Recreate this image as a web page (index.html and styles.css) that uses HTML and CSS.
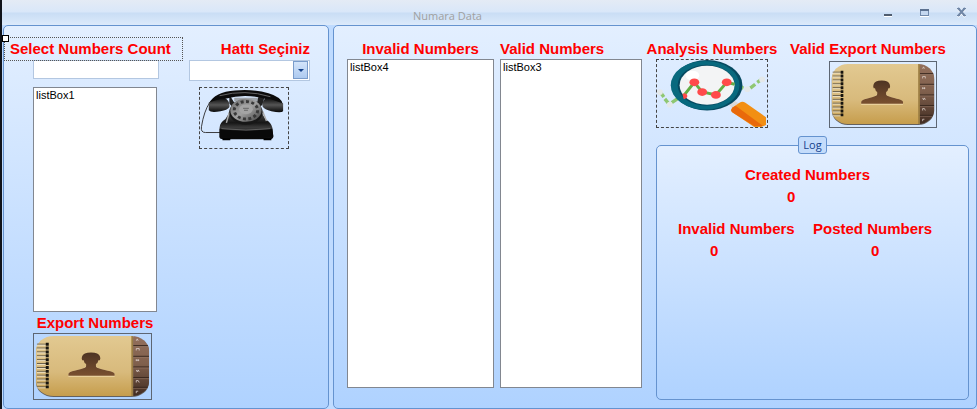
FILE: index.html
```html
<!DOCTYPE html>
<html lang="tr">
<head>
  <meta charset="UTF-8">
  <title>Numara Data</title>
  <meta name="viewport" content="width=device-width, initial-scale=1">
  <link rel="stylesheet" href="styles.css">
</head>
<body>
  <!-- shared notebook drawing -->
  <svg class="defs" width="0" height="0" aria-hidden="true">
    <defs>
      <linearGradient id="cover" x1="0" y1="0" x2="0" y2="1">
        <stop offset="0" stop-color="#e2c991"/>
        <stop offset=".6" stop-color="#d8ba7c"/>
        <stop offset="1" stop-color="#c69d4c"/>
      </linearGradient>
      <linearGradient id="tab" x1="0" y1="0" x2="0" y2="1">
        <stop offset="0" stop-color="#936f5c"/>
        <stop offset=".45" stop-color="#80604d"/>
        <stop offset="1" stop-color="#3f2a20"/>
      </linearGradient>
      <linearGradient id="person" x1="0" y1="0" x2="0" y2="1">
        <stop offset="0" stop-color="#4e3423"/>
        <stop offset="1" stop-color="#79502f"/>
      </linearGradient>
      <clipPath id="book"><rect x="2" y="2" width="115" height="62" rx="18" ry="15"/></clipPath>
      <symbol id="notebook" viewBox="0 0 119 67" preserveAspectRatio="none">
        <rect x="2" y="3" width="115" height="62" rx="18" ry="15" fill="#65615e"/>
        <g clip-path="url(#book)">
          <rect x="2" y="2" width="99" height="62" fill="url(#cover)"/>
          <rect x="99" y="2" width="2" height="62" fill="#9b7d43"/>
          <rect x="101" y="2" width="16" height="63" fill="url(#tab)"/>
          <path d="M101 12h16M101 23h16M101 34h16M101 45h16M101 55h16" stroke="#33231b"/>
          <path d="M101 13h16M101 24h16M101 35h16M101 46h16M101 56h16" stroke="#a08170" stroke-width=".5"/>
          <path d="M104 7l1-2 1 2M104 17v-2h3v2M104 28v-2M104 27h3M106 26v2M104 37l1 2 1-2 1 2M104 50v-2h2l1 2M104 61v-2h2" stroke="#dfd4cf" stroke-width=".8" fill="none"/>
        </g>
        <path d="M3 10.500h11M3 14.500h11M3 18.500h11M3 22.500h11M3 26.500h11M3 30.500h11M3 34.500h11M3 38.500h11M3 42.500h11M3 46.500h11M3 50.500h11M3 54.500h11" stroke="#5f5645"/>
        <path d="M3 11.500h9M3 15.500h9M3 19.500h9M3 23.500h9M3 27.500h9M3 31.500h9M3 35.500h9M3 39.500h9M3 43.500h9M3 47.500h9M3 51.500h9M3 55.500h9" stroke="#f2ead6" stroke-width=".8"/>
        <path d="M13.500 9v48" stroke="#17140f" stroke-width="3" stroke-dasharray="3 1"/>
        <path d="M35 44v-3q1-2 6-3l7-2q5-1 5-4h10q0 3 5 4l7 2q6 1 7 3v3z" fill="#efd9a8"/>
        <path d="M35 43v-2q1-2 6-3l7-2q5-1 5-3v-2q-2-1-2.500-4h-1.500q-1-2 0-4 1-4 9-4t9 4q1 2 0 4h-1.500q-.5 3-2.500 4v2q0 2 5 3l7 2q6 1 7 3v2z" fill="url(#person)"/>
      </symbol>
    </defs>
  </svg>

  <header class="titlebar">
    <h1 class="title">Numara Data</h1>
    <div class="window-btns">
      <button class="win-btn" aria-label="Minimize">
        <svg width="12" height="12"><path d="M2 10.500h8" stroke="#fff"/><path d="M2 9h8" stroke="#4f5d70" stroke-width="2"/></svg>
      </button>
      <button class="win-btn" aria-label="Maximize">
        <svg width="12" height="12"><rect x="1.500" y="3.500" width="8" height="6" fill="#c5d8f0" stroke="#7189ab"/><path d="M1 4h9" stroke="#5c7190" stroke-width="2"/><path d="M1 10.500h9" stroke="#fff"/></svg>
      </button>
      <button class="win-btn" aria-label="Close">
        <svg width="12" height="12"><path d="M2 3l7 8M9 3l-7 8" stroke="#fff" stroke-width="2"/><path d="M2 2l7 8M9 2l-7 8" stroke="#7086a6" stroke-width="2"/><path d="M1 2.500h3M7 2.500h3M1 9.500h3M7 9.500h3" stroke="#7086a6"/></svg>
      </button>
    </div>
  </header>

  <main class="form">
    <section class="panel panel-left">
      <label class="caption selected" for="count">Select Numbers Count</label>
      <label class="caption caption-right" for="hat">Hattı Seçiniz</label>

      <input class="textbox" id="count" type="text">
      <div class="combo">
        <select id="hat"><option value=""></option></select>
        <span class="combo-arrow"></span>
      </div>

      <div class="stack">
        <select class="listbox" size="2" aria-label="listBox1"><option>listBox1</option></select>
        <span class="caption caption-center">Export Numbers</span>
        <button class="picture picture-export" aria-label="Export Numbers">
          <svg><use href="#notebook"/></svg>
        </button>
      </div>
      <button class="picture dashed picture-phone" aria-label="Hattı Seçiniz">
        <svg viewBox="0 0 90 62" preserveAspectRatio="none">
          <defs>
            <linearGradient id="body" x1="0" y1="0" x2="0" y2="1">
              <stop offset="0" stop-color="#5a5a5a"/>
              <stop offset=".45" stop-color="#161616"/>
              <stop offset=".6" stop-color="#3a3a3a"/>
              <stop offset="1" stop-color="#050505"/>
            </linearGradient>
            <linearGradient id="ear" x1="0" y1="0" x2="0" y2="1">
              <stop offset="0" stop-color="#050505"/>
              <stop offset=".5" stop-color="#555"/>
              <stop offset="1" stop-color="#080808"/>
            </linearGradient>
            <linearGradient id="dial" x1="0" y1="0" x2="1" y2="1">
              <stop offset="0" stop-color="#6d6d6d"/>
              <stop offset=".5" stop-color="#a0a0a0"/>
              <stop offset="1" stop-color="#3e3e3e"/>
            </linearGradient>
          </defs>
          <path d="M10 15Q4 24 1.500 40q-1 6 4 6h15" fill="none" stroke="#39393b"/>
          <path d="M30 7l5 8h22l4-8 5 2-2 8-5 5H35l-5-6z" fill="#222"/>
          <path d="M35 10h24v4H35z" fill="#9fa5ab"/>
          <path d="M31 22q-2 6-5 10-6 4-6 9v10q0 2 4 2h46q5 0 5-3l-1-9q-1-5-6-8-4-4-6-11z" fill="url(#body)"/>
          <path d="M20 42q27 4 54 0l1 8q-27 3-55 1z" fill="#090909"/>
          <path d="M22 42q25 3 50 0" stroke="#777" fill="none" stroke-width=".7"/>
          <path d="M23 52h8v2h-8zM65 52h8v2h-8z" fill="#000"/>
          <path d="M30 25l-3 11M64 24l4 10" stroke="#aaa" stroke-width="1.500"/>
          <path d="M9 16Q15 4 36 2.500q20-1.500 34 3 14 4 15 12L69 12Q48 5 26 11z" fill="#0b0b0b"/>
          <path d="M20 8Q46 1 72 9" stroke="#666" fill="none"/>
          <path d="M9 15l16-5q6 3 5 10-2 3-9 4-10 2-12-1zM85 16l-17-6q-5 3-4 9 2 3 9 5 10 2 12 0z" fill="url(#ear)"/>
          <ellipse cx="47" cy="25" rx="17" ry="13" fill="#171717"/>
          <ellipse cx="47" cy="23" rx="16" ry="12" fill="url(#dial)"/>
          <ellipse cx="47" cy="23" rx="12" ry="9" fill="none" stroke="#393939" stroke-width="3" stroke-dasharray="3 2.500"/>
          <ellipse cx="47" cy="22" rx="7" ry="5" fill="#a4a4a4"/>
          <path d="M44 21h6M45 23h4" stroke="#666"/>
        </svg>
      </button>
    </section>

    <section class="panel panel-right">
      <div class="list-col">
        <label class="caption caption-center" for="invalid">Invalid Numbers</label>
        <select class="listbox" id="invalid" size="2"><option>listBox4</option></select>
      </div>
      <div class="list-col">
        <label class="caption" for="valid">Valid Numbers</label>
        <select class="listbox" id="valid" size="2"><option>listBox3</option></select>
      </div>

      <div class="side">
        <div class="actions">
          <div class="action action-analysis">
            <span class="caption caption-center">Analysis Numbers</span>
            <button class="picture dashed picture-analysis" aria-label="Analysis Numbers">
              <svg viewBox="0 0 112 69" preserveAspectRatio="none">
                <path d="M4 34l3 4M8 40l4 5M15 44l13-9M80 26l8 3M95 29l5-4M102 23l6-4" fill="none" stroke="#8fc772" stroke-width="3.500"/>
                <path d="M73 46l7 6 7-5-8-5z" fill="#d9d9d9"/>
                <ellipse cx="51" cy="26" rx="36" ry="26" fill="#064a61"/>
                <ellipse cx="49" cy="26" rx="35" ry="25" fill="#08697e"/>
                <ellipse cx="50" cy="26" rx="29" ry="21" fill="#064a61"/>
                <ellipse cx="51" cy="26" rx="28" ry="20" fill="#f3f4f5"/>
                <ellipse cx="36" cy="16" rx="7" ry="5" fill="#fff"/>
                <path d="M27 37l11-14 8 10 14 3 11-13 8 2" fill="none" stroke="#62ad45" stroke-width="3"/>
                <g fill="#ff4a4a">
                  <path d="M26 35q4-2 5 2-1 4-4 3z"/>
                  <ellipse cx="38" cy="23" rx="5" ry="4"/><ellipse cx="46" cy="33" rx="5" ry="4"/>
                  <ellipse cx="60" cy="36" rx="5" ry="4"/><ellipse cx="71" cy="23" rx="5" ry="4"/>
                </g>
                <g fill="#e4e8e9">
                  <circle cx="3" cy="33" r="3"/><circle cx="13" cy="46" r="3"/>
                  <circle cx="92" cy="30" r="3"/><circle cx="107" cy="20" r="3"/>
                </g>
                <path d="M77 49l7-5q3-2 6 0l21 15v8l-5 2h-7L77 54q-3-2 0-5z" fill="#f28f13"/>
                <path d="M77 49l3-2 28 21h-9L77 54q-3-2 0-5z" fill="#e9690b"/>
              </svg>
            </button>
          </div>
          <div class="action">
            <span class="caption">Valid Export Numbers</span>
            <button class="picture picture-valid" aria-label="Valid Export Numbers">
              <svg><use href="#notebook"/></svg>
            </button>
          </div>
        </div>

        <fieldset class="log">
          <legend>Log</legend>
          <div class="stat stat-created">
            <span class="caption">Created Numbers</span>
            <output class="value">0</output>
          </div>
          <div class="stat-row">
            <div class="stat stat-invalid">
              <span class="caption">Invalid Numbers</span>
              <output class="value">0</output>
            </div>
            <div class="stat stat-posted">
              <span class="caption">Posted Numbers</span>
              <output class="value">0</output>
            </div>
          </div>
        </fieldset>
      </div>
    </section>
  </main>
</body>
</html>
```
FILE: styles.css
```css
* {
  box-sizing: border-box;
}
body {
  margin: 0;
  min-height: 100vh;
  display: flex;
  flex-direction: column;
  border-left: 2px solid #10131a;
  background: #bfdbff;
  font-family: "Liberation Sans", Arial, sans-serif;
}
button {
  padding: 0;
  background: none;
  border: none;
}
.defs {
  position: absolute;
}

/* title bar */
.titlebar {
  height: 25px;
  display: grid;
  grid-template-columns: 1fr auto 1fr;
  background: linear-gradient(#e4ebf5, #d9e7f9 12px, #c9ddf5 13px, #dceafb);
}
.title {
  grid-column: 2;
  margin: 0 84px 0 0;
  padding-top: 7px;
  font: 11px/18px "Open Sans", "Noto Sans", sans-serif;
  color: #a0a0a0;
}
.window-btns {
  display: flex;
  justify-content: flex-end;
  gap: 25px;
  padding: 6px 9px 0 0;
}
.win-btn {
  width: 12px;
  height: 12px;
}
.win-btn svg {
  display: block;
}

/* panels */
.form {
  flex: 1;
  display: grid;
  grid-template-columns: 326fr 644fr;
  gap: 4px;
  padding-left: 1px;
}
.panel {
  border: 1px solid #6593cf;
  border-radius: 5px;
  background: linear-gradient(#e3efff, #afd2ff);
}
.panel-left {
  display: grid;
  grid-template-columns: 179px 121px;
  grid-template-rows: 23px 27px 1fr;
  column-gap: 6px;
  align-items: start;
  padding: 11px 0 8px;
}
.panel-right {
  display: flex;
  padding: 12px 7px 0 13px;
}

/* captions */
.caption {
  font-size: 15px;
  font-weight: bold;
  line-height: 21px;
  color: #f00;
  white-space: nowrap;
}
.caption-right {
  line-height: 24px;
  text-align: right;
}
.caption-center {
  align-self: center;
}
.selected {
  position: relative;
  height: 24px;
  padding-left: 5px;
  border: 1px dotted #555;
}
.selected::before {
  content: "";
  position: absolute;
  left: -3px;
  top: -3px;
  width: 5px;
  height: 5px;
  background: #fff;
  border: 1px solid #000;
}

/* fields */
.textbox {
  width: 126px;
  height: 19px;
  margin-left: 29px;
  padding: 0 4px;
  border: 1px solid #b3c7e1;
  outline: none;
}
.combo {
  position: relative;
}
.combo select {
  display: block;
  width: 100%;
  height: 21px;
  appearance: none;
  background: #fff;
  border: 1px solid #b3c7e1;
  border-radius: 0;
}
.combo-arrow {
  position: absolute;
  top: 1px;
  right: 2px;
  width: 15px;
  height: 18px;
  border: 1px solid #7a9ccb;
  background: linear-gradient(#d3e4fa, #adcaf0);
  pointer-events: none;
}
.combo-arrow::after {
  content: "";
  position: absolute;
  left: 4px;
  top: 7px;
  border: 3px solid transparent;
  border-top-color: #15428b;
  border-bottom: none;
}
.listbox {
  flex: 1;
  width: 100%;
  padding: 1px 0;
  background: #fff;
  border: 1px solid #828790;
  border-radius: 0;
  font: 11px/14px "Liberation Sans", Arial, sans-serif;
  color: #000;
  overflow: hidden;
}
.listbox option {
  padding: 0 2px;
  min-height: 14px;
}
.stack {
  align-self: stretch;
  width: 124px;
  margin-left: 29px;
  display: flex;
  flex-direction: column;
}

/* pictures */
.picture {
  flex: none;
  border: 1px solid #5d6673;
}
.picture svg {
  display: block;
  width: 100%;
  height: 100%;
}
.dashed {
  border: 1px dashed #444;
}
.picture-export {
  width: 119px;
  height: 67px;
}
.picture-phone {
  width: 90px;
  height: 62px;
  margin-left: 10px;
}
.picture-analysis {
  width: 112px;
  height: 69px;
}
.picture-valid {
  width: 108px;
  height: 67px;
  margin-top: 2px;
  margin-left: 39px;
}

/* right panel */
.list-col {
  display: flex;
  flex-direction: column;
  width: 147px;
  padding-bottom: 20px;
}
.list-col + .list-col {
  width: 142px;
  margin-left: 6px;
}
.side {
  flex: 1;
  display: flex;
  flex-direction: column;
  margin-left: 14px;
  padding-bottom: 8px;
}
.actions {
  display: flex;
  gap: 22px;
  margin-bottom: 8px;
}
.action {
  display: flex;
  flex-direction: column;
}
.action-analysis {
  width: 112px;
}
.log {
  flex: 1;
  margin: 0;
  padding: 10px 0 0;
  border: 1px solid #6593cf;
  border-radius: 5px;
  background: linear-gradient(#e3efff, #afd2ff);
}
.log legend {
  margin: 0 auto;
  height: 18px;
  padding: 0 4px;
  border: 1px solid #6593cf;
  border-radius: 3px;
  background: #c4dcfb;
  font: 11px/16px "Open Sans", "Noto Sans", sans-serif;
  color: #15428b;
}
.stat {
  display: flex;
  flex-direction: column;
}
.value {
  font-size: 15px;
  font-weight: bold;
  line-height: 23px;
  color: #f00;
}
.stat-created {
  padding-left: 88px;
}
.stat-created .value {
  padding-left: 42px;
}
.stat-row {
  display: flex;
  gap: 16px;
  margin-top: 10px;
  padding-left: 21px;
}
.stat-invalid {
  width: 119px;
}
.stat-invalid .value {
  padding-left: 32px;
}
.stat-posted .value {
  padding-left: 58px;
}
```
